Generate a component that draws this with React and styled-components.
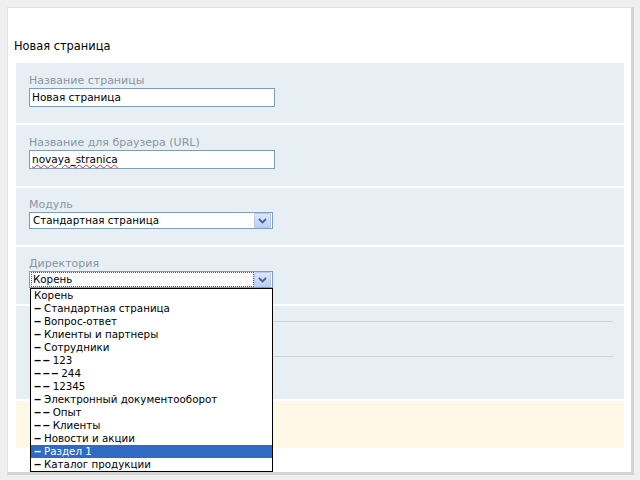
import React from 'react';
import styled, { createGlobalStyle } from 'styled-components';

const GlobalStyle = createGlobalStyle`
  html, body {
    margin: 0;
    padding: 0;
    background: #efefef;
  }
  body {
    font-family: "DejaVu Sans", Verdana, sans-serif;
    color: #000;
  }
`;

const directories = [
  { name: 'Корень', level: 0 },
  { name: 'Стандартная страница', level: 1 },
  { name: 'Вопрос-ответ', level: 1 },
  { name: 'Клиенты и партнеры', level: 1 },
  { name: 'Сотрудники', level: 1 },
  { name: '123', level: 2 },
  { name: '244', level: 3 },
  { name: '12345', level: 2 },
  { name: 'Электронный документооборот', level: 1 },
  { name: 'Опыт', level: 2 },
  { name: 'Клиенты', level: 2 },
  { name: 'Новости и акции', level: 1 },
  { name: 'Раздел 1', level: 1, selected: true },
  { name: 'Каталог продукции', level: 1 },
];

function Arrow() {
  return (
    <ArrowButton>
      <svg width="9" height="6" viewBox="0 0 9 6">
        <path d="M1 1 L4.5 4.5 L8 1" fill="none" stroke="#4d6185" strokeWidth="1.8" />
      </svg>
    </ArrowButton>
  );
}

function App() {
  return (
    <>
      <GlobalStyle />
      <Panel>
        <Heading>Новая страница</Heading>
        <Sections>
          <Section>
            <Label>Название страницы</Label>
            <TextBox>Новая страница</TextBox>
          </Section>
          <Section $tall>
            <Label>Название для браузера (URL)</Label>
            <TextBox>
              <Misspelled>novaya_stranica</Misspelled>
            </TextBox>
          </Section>
          <Section>
            <Label $tight>Модуль</Label>
            <Select>
              <SelectText>Стандартная страница</SelectText>
              <Arrow />
            </Select>
          </Section>
          <Section>
            <Label $tight>Директория</Label>
            <SelectWrap>
              <Select>
                <SelectText $focused>Корень</SelectText>
                <Arrow />
              </Select>
              <DropList>
                {directories.map((d) => (
                  <DropItem key={d.name} $selected={d.selected}>
                    {d.level > 0 && <Dashes>{'‒'.repeat(d.level)}</Dashes>}
                    {d.level > 0 && ' '}
                    {d.name}
                  </DropItem>
                ))}
              </DropList>
            </SelectWrap>
          </Section>
          <RuleSection>
            <Rule />
            <Rule $gap />
          </RuleSection>
          <NoteSection />
        </Sections>
      </Panel>
    </>
  );
}

export default App;

const Panel = styled.div`
  margin: 7px 0 0 7px;
  width: 623px;
  height: 464px;
  background: #fff;
  border-top: 1px solid #e2e2e2;
  border-left: 1px solid #e2e2e2;
  border-right: 3px solid #d4d4d4;
  border-bottom: 3px solid #d4d4d4;
`;

const Heading = styled.div`
  padding: 31px 0 10px 6px;
  font-size: 11.4px;
  line-height: 14px;
  color: #000;
`;

const Sections = styled.div`
  margin: 0 7px 0 8px;
`;

const Section = styled.div`
  background: #e8eff4;
  padding: 10px 13px ${(p) => (p.$tall ? '17px' : '16px')};
  margin-bottom: 2px;
`;

const Label = styled.div`
  font-size: 11px;
  line-height: ${(p) => (p.$tight ? '14px' : '15px')};
  color: #8796a3;
`;

const TextBox = styled.div`
  box-sizing: border-box;
  width: 246px;
  height: 19px;
  border: 1px solid #7f9db9;
  background: #fff;
  padding: 0 2px;
  font-size: 10.5px;
  line-height: 17px;
  color: #000;
`;

const Misspelled = styled.span`
  text-decoration: underline wavy #e22;
  text-decoration-thickness: 1px;
  text-underline-offset: 1px;
`;

const SelectWrap = styled.div`
  position: relative;
  width: 244px;
`;

const Select = styled.div`
  box-sizing: border-box;
  display: flex;
  align-items: center;
  width: 244px;
  height: 17px;
  border: 1px solid #7f9db9;
  background: #fff;
  padding: 0 1px;
`;

const SelectText = styled.div`
  flex: 1;
  height: 13px;
  font-size: 10.3px;
  line-height: 13px;
  padding-left: 1px;
  border: 1px ${(p) => (p.$focused ? 'dotted #555' : 'solid transparent')};
`;

const ArrowButton = styled.div`
  display: flex;
  align-items: center;
  justify-content: center;
  width: 15px;
  height: 13px;
  border: 1px solid #b7c9f0;
  border-radius: 1px;
  background: linear-gradient(#dbe6fd, #bccffa);
`;

const DropList = styled.div`
  position: absolute;
  top: 17px;
  left: 1px;
  z-index: 2;
  box-sizing: border-box;
  width: 243px;
  border: 1px solid #000;
  background: #fff;
`;

const DropItem = styled.div`
  height: 13px;
  font-size: 10.3px;
  line-height: 13px;
  padding-left: 3px;
  white-space: nowrap;
  color: ${(p) => (p.$selected ? '#fff' : '#000')};
  background: ${(p) => (p.$selected ? '#316ac5' : 'transparent')};
`;

const Dashes = styled.span`
  letter-spacing: 1.5px;
  margin-right: -2px;
  font-weight: bold;
`;

const RuleSection = styled.div`
  background: #e8eff4;
  padding: 15px 11px 42px 14px;
  margin-bottom: 2px;
`;

const Rule = styled.div`
  height: 1px;
  background: #cbd3da;
  margin-top: ${(p) => (p.$gap ? '34px' : '0')};
`;

const NoteSection = styled.div`
  background: #fff8e7;
  height: 47px;
`;
